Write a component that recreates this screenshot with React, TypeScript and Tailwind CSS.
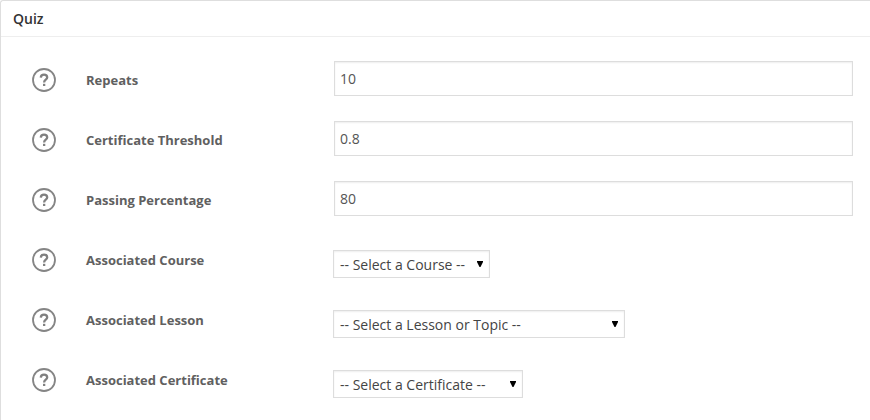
const Help = () => (
  <svg width="24" height="24" viewBox="0 0 24 24" fill="none" className="shrink-0">
    <circle cx="12" cy="12" r="11" stroke="#858585" strokeWidth="1.8" />
    <path d="M8.8 9.6c.1-1.9 1.3-2.9 3.2-2.9s3.2 1 3.2 2.7c0 2.3-3.1 2.3-3.1 5" stroke="#808080" strokeWidth="2.3" />
    <rect x="11" y="15.8" width="2.3" height="2.2" fill="#808080" />
  </svg>
);

const inputs = [
  { label: "Repeats", value: "10" },
  { label: "Certificate Threshold", value: "0.8" },
  { label: "Passing Percentage", value: "80" },
];
const selects = [
  { label: "Associated Course", value: "-- Select a Course --", width: "w-[157px]" },
  { label: "Associated Lesson", value: "-- Select a Lesson or Topic --", width: "w-[292px]" },
  { label: "Associated Certificate", value: "-- Select a Certificate --", width: "w-[190px]" },
];

const Label = ({ text }: { text: string }) => (
  <div className="flex h-6 w-[302px] shrink-0 items-center gap-[30px] text-[13px] font-bold text-[#606060]">
    <Help />
    <span className="pt-px">{text}</span>
  </div>
);

export default function App() {
  return (
    <div className="h-[420px] overflow-hidden rounded-tl-[3px] border-t border-l border-[#dedede] bg-white font-['Open_Sans',sans-serif]">
      <h3 className="box-content flex h-[35px] items-center border-b border-[#eee] pl-3 text-[14px] font-semibold text-[#333]">Quiz</h3>
      <div className="pt-6 pl-[31px]">
        {inputs.map((r) => (
          <div key={r.label} className="flex h-[60px] items-start">
            <div className="pt-[7px]"><Label text={r.label} /></div>
            <div className="flex h-[35px] w-[519px] items-center border border-[#ddd] pl-[5px] text-[14px] text-[#555] shadow-[inset_0_1px_2px_rgba(0,0,0,0.07)]">{r.value}</div>
          </div>
        ))}
        {selects.map((r) => (
          <div key={r.label} className="flex h-[60px] items-start">
            <div className="pt-[7px]"><Label text={r.label} /></div>
            <div className={`-ml-px mt-[9px] flex h-7 items-center justify-between border border-[#ddd] pr-[6px] pl-[6px] text-[14px] text-[#444] shadow-[inset_0_1px_2px_rgba(0,0,0,0.07)] ${r.width}`}>
              <span className="whitespace-nowrap">{r.value}</span>
              <svg width="6" height="6" viewBox="0 0 6 6"><path d="M0 0h6v1L3.5 6h-1L0 1z" fill="#000" /></svg>
            </div>
          </div>
        ))}
      </div>
    </div>
  );
}
